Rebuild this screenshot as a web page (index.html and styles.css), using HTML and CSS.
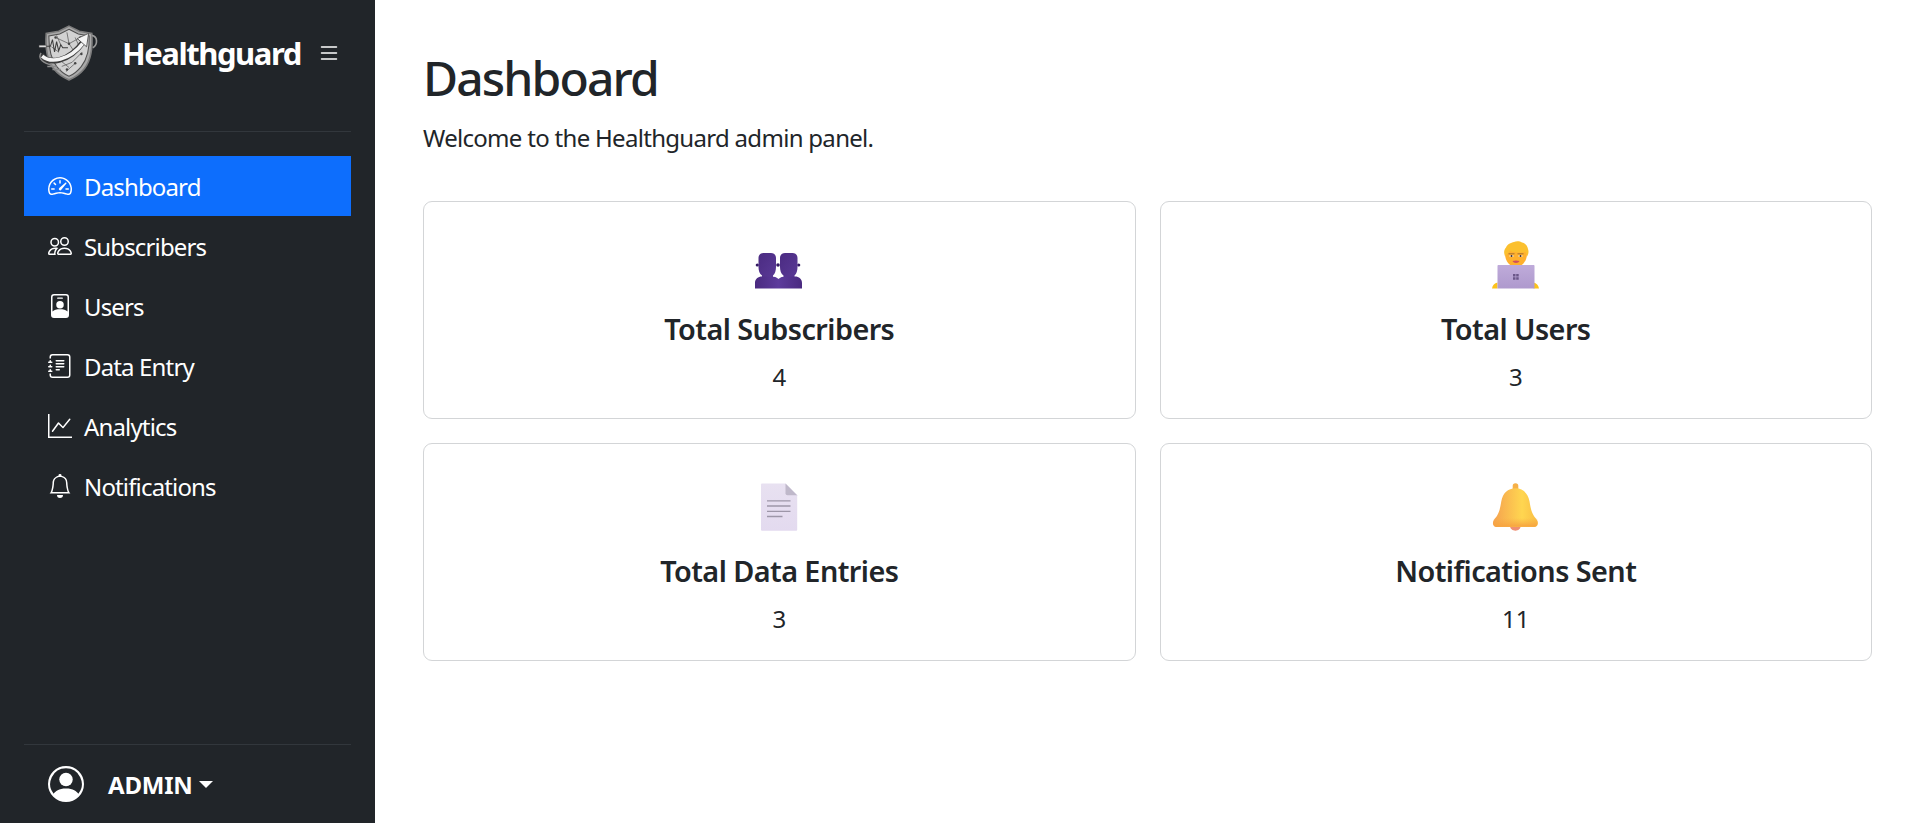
FILE: index.html
```html
<!DOCTYPE html>
<html lang="en">
<head>
<meta charset="utf-8">
<title>Healthguard</title>
<link rel="stylesheet" href="styles.css">
</head>
<body>
<div class="app">
<aside class="sidebar">
  <div class="brand">
    <svg class="logo" viewBox="0 0 60 56" fill="none">
      <path d="M30 2 L40 7 L52 9 C53 22 52 34 45 43 C41 48 35 52 30 54 C25 52 19 48 15 43 C8 34 7 22 8 9 L20 7 Z" fill="#a9a9a9" stroke="#7d7d7d" stroke-width="1.600"/>
      <path d="M30 5 L39 9.500 L49.500 11.500 C50 23 48 33 42 41 C38 46 34 49 30 50.500 C26 49 22 46 18 41 C12 33 10.500 23 10.500 11.500 L21 9.500 Z" fill="#d2d2d2" stroke="#4f4f4f" stroke-width="1"/>
      <path d="M17 13 L30 19 L41 13 M30 19 L28 8 M30 19 L36 28 M23 41 L33 37 L43 27 M13 22 L20 27 M27 46 L36 38 M20 34 L30 42 M36 13 L40 22 M18 11 L22 20" stroke="#666" stroke-width=".8"/>
      <g fill="#444"><circle cx="17" cy="13" r="1.200"/><circle cx="30" cy="19" r="1.200"/><circle cx="41" cy="13" r="1.200"/><circle cx="36" cy="38" r="1.200"/><circle cx="28" cy="44" r="1.200"/><circle cx="42" cy="29" r="1.200"/></g>
      <path d="M2 21.500 H12 L14 15 L16 27 L18 17 L20 26 L22 20 L24 23 H29" stroke="#3c3c3c" stroke-width="1"/>
      <path d="M1 20.500 H8 V22.500 H1 Z" fill="#eeeeee" stroke="#444" stroke-width=".5"/>
      <path d="M3 30 C10 39 29 38 44 17" stroke="#3d3d3d" stroke-width="5.500"/>
      <path d="M4 31 C12 38 30 36 44 18" stroke="#f4f4f4" stroke-width="3.400"/>
      <path d="M38 14 L49 9 L47 22 Z" fill="#f4f4f4" stroke="#444" stroke-width=".8"/>
      <path d="M52 11 C58 12 58 20 53 23" stroke="#9a9a9a" stroke-width="1.600"/>
      <path d="M3 28 C-1 34 6 38 14 40 M9 41 H18 M14 44 H22" stroke="#8c8c8c" stroke-width="1.400"/>
    </svg>
    <span class="brand-name">Healthguard</span>
    <svg class="toggle" viewBox="0 0 16 16" fill="currentColor"><path fill-rule="evenodd" d="M2.5 12a.5.5 0 0 1 .5-.5h10a.5.5 0 0 1 0 1H3a.5.5 0 0 1-.5-.5m0-4a.5.5 0 0 1 .5-.5h10a.5.5 0 0 1 0 1H3a.5.5 0 0 1-.5-.5m0-4a.5.5 0 0 1 .5-.5h10a.5.5 0 0 1 0 1H3a.5.5 0 0 1-.5-.5"/></svg>
  </div>
  <hr class="rule rule-top">
  <nav class="nav">
    <a class="nav-link active" href="#">
      <svg class="nav-icon" viewBox="0 0 16 16" fill="currentColor"><path d="M8 4a.5.5 0 0 1 .5.5V6a.5.5 0 0 1-1 0V4.5A.5.5 0 0 1 8 4M3.732 5.732a.5.5 0 0 1 .707 0l.915.914a.5.5 0 1 1-.708.708l-.914-.915a.5.5 0 0 1 0-.707M2 10a.5.5 0 0 1 .5-.5h1.586a.5.5 0 0 1 0 1H2.5A.5.5 0 0 1 2 10m9.5 0a.5.5 0 0 1 .5-.5h1.5a.5.5 0 0 1 0 1H12a.5.5 0 0 1-.5-.5m.754-4.246a.39.39 0 0 0-.527-.02L7.547 9.31a.91.91 0 1 0 1.302 1.258l3.434-4.297a.39.39 0 0 0-.029-.518z"/><path fill-rule="evenodd" d="M0 10a8 8 0 1 1 15.547 2.661c-.442 1.253-1.845 1.602-2.932 1.25C11.309 13.488 9.475 13 8 13c-1.474 0-3.31.488-4.615.911-1.087.352-2.49.003-2.932-1.25A8 8 0 0 1 0 10m8-7a7 7 0 0 0-6.603 9.329c.203.575.923.876 1.68.63C4.397 12.533 6.358 12 8 12s3.604.532 4.923.96c.757.245 1.477-.056 1.68-.631A7 7 0 0 0 8 3"/></svg>
      <span class="nav-label">Dashboard</span>
    </a>
    <a class="nav-link" href="#">
      <svg class="nav-icon" viewBox="0 0 16 16" fill="currentColor"><path d="M15 14s1 0 1-1-1-4-5-4-5 3-5 4 1 1 1 1zm-7.978-1L7 12.996c.001-.264.167-1.03.76-1.72C8.312 10.629 9.282 10 11 10c1.717 0 2.687.63 3.24 1.276.593.69.758 1.457.76 1.72l-.008.002-.014.002zM11 7a2 2 0 1 0 0-4 2 2 0 0 0 0 4m3-2a3 3 0 1 1-6 0 3 3 0 0 1 6 0M6.936 9.28a6 6 0 0 0-1.23-.247A7 7 0 0 0 5 9c-4 0-5 3-5 4q0 1 1 1h4.216A2.24 2.24 0 0 1 5 13c0-1.01.377-2.042 1.09-2.904.243-.294.526-.569.846-.816M4.92 10A5.5 5.5 0 0 0 4 13H1c0-.26.164-1.03.76-1.724.545-.636 1.492-1.256 3.16-1.275ZM1.5 5.5a3 3 0 1 1 6 0 3 3 0 0 1-6 0m3-2a2 2 0 1 0 0 4 2 2 0 0 0 0-4"/></svg>
      <span class="nav-label">Subscribers</span>
    </a>
    <a class="nav-link" href="#">
      <svg class="nav-icon" viewBox="0 0 16 16" fill="currentColor"><path fill-rule="evenodd" d="M4 0h8a2 2 0 0 1 2 2v12a2 2 0 0 1-2 2H4a2 2 0 0 1-2-2V2a2 2 0 0 1 2-2m0 1a1 1 0 0 0-1 1v9.6C4 10.6 5.8 10.2 8 10.2s4 .4 5 1.4V2a1 1 0 0 0-1-1z"/><path d="M6.500 2.300h3a.4.4 0 0 1 0 .9h-3a.4.4 0 0 1 0-.9M8 4.700a2.500 2.500 0 1 1 0 5 2.500 2.500 0 0 1 0-5"/></svg>
      <span class="nav-label">Users</span>
    </a>
    <a class="nav-link" href="#">
      <svg class="nav-icon" viewBox="0 0 16 16" fill="currentColor"><path d="M5 10.500a.5.5 0 0 1 .5-.5h2a.5.5 0 0 1 0 1h-2a.5.5 0 0 1-.5-.5m0-2a.5.5 0 0 1 .5-.5h5a.5.5 0 0 1 0 1h-5a.5.5 0 0 1-.5-.5m0-2a.5.5 0 0 1 .5-.5h5a.5.5 0 0 1 0 1h-5a.5.5 0 0 1-.5-.5m0-2a.5.5 0 0 1 .5-.5h5a.5.5 0 0 1 0 1h-5a.5.5 0 0 1-.5-.5"/><path d="M3 0h10a2 2 0 0 1 2 2v12a2 2 0 0 1-2 2H3a2 2 0 0 1-2-2v-1h1v1a1 1 0 0 0 1 1h10a1 1 0 0 0 1-1V2a1 1 0 0 0-1-1H3a1 1 0 0 0-1 1v1H1V2a2 2 0 0 1 2-2"/><path d="M1 5v-.5a.5.5 0 0 1 1 0V5h.5a.5.5 0 0 1 0 1h-2a.5.5 0 0 1 0-1zm0 3v-.5a.5.5 0 0 1 1 0V8h.5a.5.5 0 0 1 0 1h-2a.5.5 0 0 1 0-1zm0 3v-.5a.5.5 0 0 1 1 0v.5h.5a.5.5 0 0 1 0 1h-2a.5.5 0 0 1 0-1z"/></svg>
      <span class="nav-label">Data Entry</span>
    </a>
    <a class="nav-link" href="#">
      <svg class="nav-icon" viewBox="0 0 16 16" fill="currentColor"><path fill-rule="evenodd" d="M0 0h1v15h15v1H0zm14.817 3.113a.5.5 0 0 1 .07.704l-4.5 5.5a.5.5 0 0 1-.74.037L7.06 6.767l-3.656 5.027a.5.5 0 0 1-.808-.588l4-5.5a.5.5 0 0 1 .758-.06l2.609 2.61 4.15-5.073a.5.5 0 0 1 .704-.07"/></svg>
      <span class="nav-label">Analytics</span>
    </a>
    <a class="nav-link" href="#">
      <svg class="nav-icon" viewBox="0 0 16 16" fill="currentColor"><path d="M8 16a2 2 0 0 0 2-2H6a2 2 0 0 0 2 2M8 1.918l-.797.161A4 4 0 0 0 4 6c0 .628-.134 2.197-.459 3.742-.16.767-.376 1.566-.663 2.258h10.244c-.287-.692-.502-1.49-.663-2.258C12.134 8.197 12 6.628 12 6a4 4 0 0 0-3.203-3.92zM14.220 12c.223.447.481.801.78 1H1c.299-.199.557-.553.78-1C2.680 10.200 3 6.880 3 6c0-2.420 1.720-4.440 4.005-4.901a1 1 0 1 1 1.990 0A5 5 0 0 1 13 6c0 .880.320 4.200 1.220 6"/></svg>
      <span class="nav-label">Notifications</span>
    </a>
  </nav>
  <hr class="rule rule-bottom">
  <div class="user">
    <svg class="avatar" viewBox="0 0 16 16" fill="currentColor"><path d="M11 6a3 3 0 1 1-6 0 3 3 0 0 1 6 0"/><path fill-rule="evenodd" d="M0 8a8 8 0 1 1 16 0A8 8 0 0 1 0 8m8-7a7 7 0 0 0-5.468 11.370C3.242 11.226 4.805 10 8 10s4.757 1.225 5.468 2.370A7 7 0 0 0 8 1"/></svg>
    <strong class="user-name">ADMIN</strong>
    <span class="caret"></span>
  </div>
</aside>
<main class="main">
  <h1 class="title">Dashboard</h1>
  <p class="lead">Welcome to the Healthguard admin panel.</p>
  <section class="cards">
    <article class="card">
      <svg class="emoji" viewBox="0 0 48 48">
        <defs>
          <linearGradient id="bust" x1="0" y1="0" x2="1" y2="1"><stop offset="0" stop-color="#4b2b82"/><stop offset="1" stop-color="#5a3a96"/></linearGradient>
          <linearGradient id="shoulder" x1="0" y1="0" x2="1" y2="0"><stop offset="0" stop-color="#4a2a80"/><stop offset=".5" stop-color="#5d3b9c"/><stop offset="1" stop-color="#4a2a80"/></linearGradient>
        </defs>
        <circle cx="2.300" cy="24" r="1.600" fill="#341a63"/><circle cx="23" cy="24" r="1.800" fill="#341a63"/><circle cx="43.700" cy="24" r="1.600" fill="#341a63"/>
        <path d="M3.500 17c0-3 2-5 5-5h7.500c3 0 5 2 5 5v9c0 3.500-1 7-3 8.500v3H7v-3c-2.500-1.500-3.500-5-3.500-8.500z" fill="url(#bust)"/>
        <path d="M25 17c0-3 2-5 5-5h7.500c3 0 5 2 5 5v9c0 3.500-1 7-3 8.500v3H28.500v-3c-2.500-1.500-3.500-5-3.500-8.500z" fill="url(#bust)"/>
        <path d="M0 47.500V42c0-4 3-6.500 7-6.500h9c3 0 6 .8 7.500 2.500C25 36.300 28 35.500 31 35.500h9c4 0 7 2.500 7 6.500v5.500z" fill="url(#shoulder)"/>
      </svg>
      <h2 class="card-title">Total Subscribers</h2>
      <p class="card-value">4</p>
    </article>
    <article class="card">
      <svg class="emoji" viewBox="0 0 48 48">
        <defs><linearGradient id="laptop" x1="0" y1="0" x2="0" y2="1"><stop offset="0" stop-color="#bfabda"/><stop offset="1" stop-color="#ae99cd"/></linearGradient></defs>
        <path d="M0 47.500c.5-3 2.500-5.500 5.500-6v6zM47 47.500c-.5-3-2.500-5.500-5.500-6v6z" fill="#fcc21b"/>
        <path d="M24 2c-6.500 0-11 4.500-11 11 0 7 5 13 11 13s11-6 11-13c0-6.500-4.500-11-11-11" fill="#ffb02e"/>
        <path d="M13 15c-1.500-3-1-6.500 1-8.500 1-3 5-5 8-5.500 2-1 6-1 8 .5 3 .5 5.500 3 6 6.500 1 3 .5 5-1 7.500-.3-2-.8-3.500-1.800-4.500-5 1-11 .5-15.200-1-1 1-2.500 3-5 5z" fill="#fbc02f"/>
        <path d="M16.500 12.800h6M25.500 12.800h6" stroke="#a0692f" stroke-width=".9"/>
        <ellipse cx="19.500" cy="15" rx="2.200" ry="1.100" fill="#fff3d6"/><ellipse cx="28.500" cy="15" rx="2.200" ry="1.100" fill="#fff3d6"/>
        <circle cx="19.500" cy="15" r="1" fill="#3a2a30"/><circle cx="28.500" cy="15" r="1" fill="#3a2a30"/>
        <path d="M20.500 20c2.200-.8 4.800-.8 7 0-1 2.500-6 2.500-7 0" fill="#d04f5e"/>
        <path d="M5.500 25c0-.7.500-1 1-1h35c.500 0 1 .3 1 1v22.500h-37z" fill="url(#laptop)"/>
        <path d="M21 33h2.500v2.500H21zM24.200 33h2.500v2.500h-2.500zM21 36.200h2.500v2.500H21zM24.200 36.200h2.500v2.500h-2.500z" fill="#6a5689"/>
      </svg>
      <h2 class="card-title">Total Users</h2>
      <p class="card-value">3</p>
    </article>
    <article class="card">
      <svg class="emoji" viewBox="0 0 48 48">
        <defs><linearGradient id="doc" x1="0" y1="0" x2="0" y2="1"><stop offset="0" stop-color="#e8e1f1"/><stop offset="1" stop-color="#e3daef"/></linearGradient></defs>
        <path d="M7 .5h23.500l11.700 11.700V46.700a1 1 0 0 1-1 1H7a1 1 0 0 1-1-1V1.500a1 1 0 0 1 1-1" fill="url(#doc)"/>
        <path d="M30.500 .5l11.700 11.700H32.500a2 2 0 0 1-2-2z" fill="#bfb8ca"/>
        <path d="M12 17.800h23.500M12 23h23.500M12 28.300h23.500M12 33.500h15.500" stroke="#9d96a8" stroke-width="1.300"/>
      </svg>
      <h2 class="card-title">Total Data Entries</h2>
      <p class="card-value">3</p>
    </article>
    <article class="card">
      <svg class="emoji" viewBox="0 0 48 48">
        <defs>
          <linearGradient id="bell" x1="0" y1="0" x2="1" y2="0"><stop offset="0" stop-color="#f5a14f"/><stop offset=".65" stop-color="#ffd650"/><stop offset="1" stop-color="#f9bd45"/></linearGradient>
          <linearGradient id="band" x1="0" y1="0" x2="0" y2="1"><stop offset="0" stop-color="#f7a945" stop-opacity="0"/><stop offset="1" stop-color="#f7a33f"/></linearGradient>
        </defs>
        <path d="M18 43h10.700c0 2.700-2.500 4.700-5.300 4.700S18 45.700 18 43" fill="#ef8f73"/>
        <path d="M20.700 7V3a2.800 2.800 0 0 1 5.600 0v4z" fill="#f6b048"/>
        <path d="M23.500 5.300c7.500 0 12.500 5 14 13 1 6 1.700 10 4 14 1 2 3 3.500 4 6 1 2.500 0 5.700-3 5.700H4.300c-3 0-4-3.200-3-5.700 1-2.500 3-4 4-6 2.300-4 3-8 4-14 1.500-8 6.500-13 14.200-13" fill="url(#bell)"/>
        <path d="M2 35h43c1.200 3 .8 8.700-2.700 8.700H4.300C1 43.700.8 38 2 35" fill="url(#band)"/>
      </svg>
      <h2 class="card-title">Notifications Sent</h2>
      <p class="card-value">11</p>
    </article>
  </section>
</main>
</div>
</body>
</html>
```

FILE: styles.css
```css
* { box-sizing: border-box; }
html, body { margin: 0; height: 100%; }
body {
  font-family: "Noto Sans", "Open Sans", sans-serif;
  font-size: 24px;
  line-height: 1.5;
  color: #212529;
  background: #fff;
}
.app { display: flex; height: 823px; overflow: hidden; }
.sidebar {
  width: 375px;
  flex: none;
  background: #212529;
  color: #fff;
  display: flex;
  flex-direction: column;
  padding: 24px 24px 0;
}
.brand { display: flex; align-items: center; height: 58px; padding-left: 14px; }
.logo { width: 62px; height: 58px; flex: none; }
.brand-name { font-size: 31px; font-weight: 700; margin-left: 22px; line-height: 1; letter-spacing: -1.45px; }
.toggle { width: 24px; height: 24px; margin-left: 16px; flex: none; }
.rule { border: 0; border-top: 1px solid #32373c; margin: 0; width: 100%; }
.rule-top { margin-top: 49px; }
.nav { display: flex; flex-direction: column; margin-top: 24px; }
.nav-link {
  display: flex;
  align-items: center;
  gap: 12px;
  height: 60px;
  padding: 0 24px;
  color: #fff;
  text-decoration: none;
  letter-spacing: -.85px;
}
.nav-link.active { background: #0d6efd; }
.nav-icon { width: 24px; height: 24px; flex: none; }
.nav-label { padding-top: 2px; }
.rule-bottom { margin-top: auto; }
.user { display: flex; align-items: center; height: 78px; padding: 0 24px; flex: none; }
.avatar { width: 36px; height: 36px; flex: none; }
.user-name { margin-left: 24px; padding-top: 2px; font-size: 24px; font-weight: 700; letter-spacing: -.2px; }
.caret {
  margin-left: 6px;
  border-top: 7px solid #fff;
  border-left: 7px solid transparent;
  border-right: 7px solid transparent;
}
.main { flex: 1; padding: 48px 47px 0 48px; min-width: 0; }
.title { margin: 0; font-size: 48px; font-weight: 500; line-height: 60px; letter-spacing: -1.85px; }
.lead { margin: 12px 0 0; line-height: 36px; letter-spacing: -.7px; }
.cards { display: grid; grid-template-columns: 1fr 1fr; gap: 24px; margin-top: 45px; }
.card {
  border: 1px solid #d3d5d7;
  border-radius: 9px;
  height: 218px;
  padding-top: 39px;
  display: flex;
  flex-direction: column;
  align-items: center;
}
.emoji { width: 48px; height: 48px; flex: none; }
.card-title { margin: 22px 0 0; font-size: 28.800px; font-weight: 600; line-height: 36px; letter-spacing: -.55px; }
.card-value { margin: 12px 0 0; line-height: 36px; }
```
